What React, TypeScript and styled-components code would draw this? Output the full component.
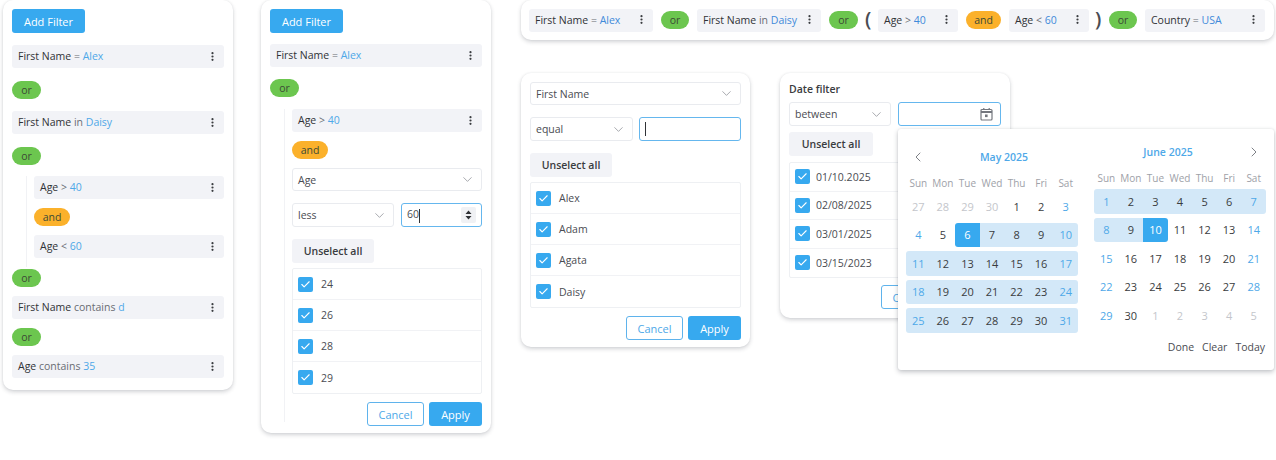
import * as React from 'react'
import styled, { createGlobalStyle } from 'styled-components'
import { ChevronDown, ChevronLeft, ChevronRight, Check } from 'lucide-react'

const GlobalStyle = createGlobalStyle`
  html, body {
    margin: 0;
    background: #fff;
    overflow: hidden;
  }
  body {
    font-family: "Open Sans", "Liberation Sans", sans-serif;
    font-size: 10.5px;
    color: #303236;
  }
`

const Page = styled.div`
  display: flex;
  align-items: flex-start;
  gap: 28px;
  padding-left: 3px;
  width: 1276px;
  height: 460px;
  box-sizing: border-box;
`

const Panel = styled.div<{ $width: number; $height: number }>`
  position: relative;
  box-sizing: border-box;
  display: flex;
  flex-direction: column;
  flex: none;
  width: ${p => p.$width}px;
  height: ${p => p.$height}px;
  padding: 9px 9px 0;
  background: #fff;
  border-radius: 10px;
  box-shadow: 0 2px 4px rgba(40, 45, 60, 0.2), 0 0 2px rgba(40, 45, 60, 0.08);
`

const RightSide = styled.div`
  display: flex;
  flex-direction: column;
  gap: 33px;
  width: 753px;
  margin-left: 2px;
`

const LowerRow = styled.div`
  display: flex;
  align-items: flex-start;
  gap: 30px;
`

const TopBar = styled.div`
  box-sizing: border-box;
  display: flex;
  align-items: center;
  gap: 8px;
  height: 40px;
  padding: 0 8px;
  background: #fff;
  border-radius: 10px;
  box-shadow: 0 2px 4px rgba(40, 45, 60, 0.2), 0 0 2px rgba(40, 45, 60, 0.08);
`

const AddButton = styled.button`
  flex: none;
  width: 73px;
  height: 24px;
  padding: 0;
  border: none;
  border-radius: 3px;
  background: #37a9ef;
  color: #fff;
  font: 500 11px "Open Sans", sans-serif;
`

const RuleBox = styled.div<{ $top?: number; $width?: number }>`
  box-sizing: border-box;
  display: flex;
  align-items: center;
  justify-content: space-between;
  flex: none;
  height: 23px;
  width: ${p => (p.$width ? `${p.$width}px` : 'auto')};
  margin-top: ${p => p.$top ?? 0}px;
  padding: 0 10px 1px 6px;
  background: #f2f3f7;
  border-radius: 3px;
`

const RuleText = styled.span`
  font-weight: 500;
  color: #303236;
  white-space: nowrap;
`

const RuleOp = styled.span`
  font-weight: 400;
  color: #696c73;
`

const RuleValue = styled.span<{ $dark?: boolean }>`
  font-weight: 400;
  color: ${p => (p.$dark ? '#3f8ada' : '#4ea8e8')};
`

const Kebab = styled.svg`
  flex: none;
  width: 3px;
  height: 9px;
  fill: #3a3c40;
`

const Pill = styled.div<{ $kind: 'or' | 'and'; $top?: number; $width?: number }>`
  box-sizing: border-box;
  display: flex;
  align-items: center;
  justify-content: center;
  flex: none;
  width: ${p => p.$width ?? (p.$kind === 'or' ? 29 : 36)}px;
  height: 18px;
  margin-top: ${p => p.$top ?? 0}px;
  padding-bottom: 1px;
  border-radius: 9px;
  background: ${p => (p.$kind === 'or' ? '#6cc64f' : '#fbb12b')};
  color: #3c4a36;
`

const Nested = styled.div<{ $top: number; $bottom?: number; $height?: number }>`
  display: flex;
  flex-direction: column;
  margin: ${p => p.$top}px 0 0 14px;
  padding: 0 0 ${p => p.$bottom ?? 0}px 7px;
  border-left: 1px solid #f1f2f5;
  ${p => (p.$height ? `height: ${p.$height}px;` : '')}
`

const Field = styled.div<{ $width?: number; $grow?: boolean; $focus?: boolean; $top?: number; $height?: number }>`
  box-sizing: border-box;
  display: flex;
  align-items: center;
  justify-content: space-between;
  flex: ${p => (p.$grow ? '1' : 'none')};
  width: ${p => (p.$width ? `${p.$width}px` : 'auto')};
  height: ${p => p.$height ?? 24}px;
  margin-top: ${p => p.$top ?? 0}px;
  padding: 0 6px 0 5px;
  background: #fff;
  border: 1px solid ${p => (p.$focus ? '#65b7ee' : '#e9ebef')};
  border-radius: 3px;
  color: #4a4c52;
`

const FieldRow = styled.div<{ $top: number; $gap?: number }>`
  display: flex;
  gap: ${p => p.$gap ?? 7}px;
  margin-top: ${p => p.$top}px;
`

const Caret = styled.span`
  display: inline-block;
  width: 1px;
  height: 14px;
  background: #303236;
  vertical-align: middle;
`

const Spin = styled.svg`
  flex: none;
  width: 15px;
  height: 16px;
  margin-right: -1px;
  background: #f0f1f4;
  border-radius: 2px;
  fill: #303236;
`

const Unselect = styled.div<{ $top: number; $width?: number }>`
  display: flex;
  align-items: center;
  justify-content: center;
  flex: none;
  align-self: flex-start;
  width: ${p => p.$width ?? 82}px;
  height: 24px;
  margin-top: ${p => p.$top}px;
  background: #f2f3f7;
  border-radius: 3px;
  font-weight: 600;
  color: #3a3c40;
`

const OptionList = styled.div<{ $top: number }>`
  box-sizing: border-box;
  flex: none;
  margin-top: ${p => p.$top}px;
  border: 1px solid #eef0f3;
  border-radius: 2px;
`

const OptionRow = styled.div<{ $height: number; $gap: number }>`
  box-sizing: border-box;
  display: flex;
  align-items: center;
  gap: ${p => p.$gap}px;
  height: ${p => p.$height}px;
  padding-left: 5px;
  border-bottom: 1px solid #f1f2f5;
  color: #4a4c52;
  &:last-child {
    border-bottom: none;
  }
`

const CheckBox = styled.span`
  display: flex;
  align-items: center;
  justify-content: center;
  flex: none;
  width: 15px;
  height: 15px;
  background: #37a9ef;
  border-radius: 2px;
  color: #fff;
`

const Footer = styled.div<{ $top?: number; $right?: number }>`
  display: flex;
  justify-content: flex-end;
  gap: 5px;
  margin-top: ${p => p.$top ?? 8}px;
  padding-right: ${p => p.$right ?? 0}px;
`

const CancelButton = styled.button`
  width: 57px;
  height: 24px;
  padding: 0;
  background: #fff;
  border: 1px solid #5fb3ec;
  border-radius: 3px;
  color: #4ea8e8;
  font: 500 11px "Open Sans", sans-serif;
`

const ApplyButton = styled.button`
  width: 53px;
  height: 24px;
  padding: 0;
  background: #37a9ef;
  border: none;
  border-radius: 3px;
  color: #fff;
  font: 500 11px "Open Sans", sans-serif;
`

const OpenParen = styled.span`
  flex: none;
  width: 8px;
  margin: -3px -3px 0 -1px;
  font-size: 20px;
  font-weight: 600;
  line-height: 30px;
  color: #4a4c52;
`

const CloseParen = styled.span`
  flex: none;
  width: 6px;
  margin: -3px 0 0 -2px;
  font-size: 20px;
  font-weight: 600;
  line-height: 30px;
  color: #4a4c52;
`

const DateTitle = styled.div`
  height: 15px;
  line-height: 15px;
  font-weight: 600;
  color: #3a3c40;
`

const Calendar = styled.div`
  position: absolute;
  left: 118px;
  top: 56px;
  box-sizing: border-box;
  display: flex;
  flex-direction: column;
  width: 376px;
  height: 241px;
  padding: 0 8px 15px;
  background: #fff;
  border-radius: 3px;
  box-shadow: 0 2px 5px rgba(40, 45, 60, 0.28), 0 0 2px rgba(40, 45, 60, 0.1);
`

const Months = styled.div`
  display: flex;
  gap: 16px;
`

const Month = styled.div<{ $offset: number }>`
  width: 172px;
  padding-top: ${p => 15 + p.$offset}px;
`

const MonthHead = styled.div<{ $flip?: boolean }>`
  display: flex;
  flex-direction: ${p => (p.$flip ? 'row-reverse' : 'row')};
  align-items: center;
  height: 16px;
`

const NavIcon = styled.span`
  display: flex;
  justify-content: center;
  flex: none;
  width: 24px;
  color: #74777e;
`

const MonthTitle = styled.div`
  flex: 1;
  text-align: center;
  font-weight: 600;
  color: #4ea8e8;
`

const WeekRow = styled.div`
  display: grid;
  grid-template-columns: repeat(7, 1fr);
  margin-top: 11px;
  height: 14px;
  line-height: 14px;
  text-align: center;
  font-size: 10px;
  color: #9ea1a8;
`

const DayGrid = styled.div`
  display: grid;
  grid-template-columns: repeat(7, 1fr);
  grid-auto-rows: 24.5px;
  row-gap: 4px;
  margin-top: 4px;
`

type Tone = 'plain' | 'muted' | 'weekend'
type Shade = 'none' | 'range' | 'rangeStart' | 'rangeEnd' | 'selStart' | 'selEnd'

const toneColors: Record<Tone, string> = {
  plain: '#3a3c40',
  muted: '#c4c6cb',
  weekend: '#4ea8e8',
}

const Day = styled.div<{ $tone: Tone; $shade: Shade }>`
  display: flex;
  align-items: center;
  justify-content: center;
  font-size: 11px;
  color: ${p => (p.$shade === 'selStart' || p.$shade === 'selEnd' ? '#fff' : toneColors[p.$tone])};
  background: ${p =>
    p.$shade === 'none' ? 'transparent' : p.$shade === 'selStart' || p.$shade === 'selEnd' ? '#37a9ef' : '#d3e8f8'};
  border-radius: ${p =>
    p.$shade === 'rangeStart' || p.$shade === 'selStart'
      ? '3px 0 0 3px'
      : p.$shade === 'rangeEnd' || p.$shade === 'selEnd'
        ? '0 3px 3px 0'
        : '0'};
`

const CalFooter = styled.div`
  display: flex;
  justify-content: flex-end;
  gap: 8px;
  margin-top: auto;
  padding-right: 1px;
  line-height: 15px;
  color: #4a4c52;
`

const DateIcon = styled.svg`
  flex: none;
  width: 13px;
  height: 14px;
  margin-right: 1px;
  color: #74777e;
`

const dots = () => (
  <Kebab viewBox="0 0 3 9">
    <circle cx="1.5" cy="1.2" r="1.1" />
    <circle cx="1.5" cy="4.5" r="1.1" />
    <circle cx="1.5" cy="7.8" r="1.1" />
  </Kebab>
)

const Rule = ({
  name,
  op,
  value,
  top,
  width,
  dark,
}: {
  name: string
  op: string
  value: string
  top?: number
  width?: number
  dark?: boolean
}) => (
  <RuleBox $top={top} $width={width}>
    <RuleText>
      {name} <RuleOp>{op}</RuleOp> <RuleValue $dark={dark}>{value}</RuleValue>
    </RuleText>
    {dots()}
  </RuleBox>
)

const Drop = () => <ChevronDown size={15} strokeWidth={1} color="#74777e" />

const Options = ({ items, height, gap }: { items: string[]; height: number; gap: number }) => (
  <>
    {items.map(item => (
      <OptionRow key={item} $height={height} $gap={gap}>
        <CheckBox>
          <Check size={11} strokeWidth={2.4} />
        </CheckBox>
        {item}
      </OptionRow>
    ))}
  </>
)

const weekDays = ['Sun', 'Mon', 'Tue', 'Wed', 'Thu', 'Fri', 'Sat']

const mayDays = [27, 28, 29, 30, ...Array.from({ length: 31 }, (_, i) => i + 1)]
const juneDays = [...Array.from({ length: 30 }, (_, i) => i + 1), 1, 2, 3, 4, 5]

const mayShade = (i: number): Shade => {
  if (i < 9) return 'none'
  if (i === 9) return 'selStart'
  if (i === 13) return 'rangeEnd'
  if (i % 7 === 0) return 'rangeStart'
  if (i % 7 === 6) return 'rangeEnd'
  return 'range'
}

const juneShade = (i: number): Shade => {
  if (i > 9) return 'none'
  if (i === 9) return 'selEnd'
  if (i % 7 === 0) return 'rangeStart'
  if (i === 6) return 'rangeEnd'
  return 'range'
}

const toneOf = (i: number, muted: boolean): Tone => {
  if (muted) return 'muted'
  return i % 7 === 0 || i % 7 === 6 ? 'weekend' : 'plain'
}

const CalendarMonth = ({
  title,
  offset,
  flip,
  days,
  shade,
  isMuted,
}: {
  title: string
  offset: number
  flip?: boolean
  days: number[]
  shade: (i: number) => Shade
  isMuted: (i: number) => boolean
}) => (
  <Month $offset={offset}>
    <MonthHead $flip={flip}>
      <NavIcon>{flip ? <ChevronRight size={16} strokeWidth={1.4} /> : <ChevronLeft size={16} strokeWidth={1.4} />}</NavIcon>
      <MonthTitle>{title}</MonthTitle>
    </MonthHead>
    <WeekRow>
      {weekDays.map(d => (
        <span key={d}>{d}</span>
      ))}
    </WeekRow>
    <DayGrid>
      {days.map((d, i) => (
        <Day key={i} $tone={toneOf(i, isMuted(i))} $shade={shade(i)}>
          {d}
        </Day>
      ))}
    </DayGrid>
  </Month>
)

export default function App() {
  return (
    <Page>
      <GlobalStyle />

      <Panel $width={230} $height={390}>
        <AddButton>Add Filter</AddButton>
        <Rule name="First Name" op="=" value="Alex" top={12} />
        <Pill $kind="or" $top={13}>or</Pill>
        <Rule name="First Name" op="in" value="Daisy" top={12} />
        <Pill $kind="or" $top={13}>or</Pill>
        <Nested $top={11} $bottom={9}>
          <Rule name="Age" op=">" value="40" />
          <Pill $kind="and" $top={9}>and</Pill>
          <Rule name="Age" op="<" value="60" top={9} />
        </Nested>
        <Pill $kind="or" $top={2}>or</Pill>
        <Rule name="First Name" op="contains" value="d" top={9} />
        <Pill $kind="or" $top={9}>or</Pill>
        <Rule name="Age" op="contains" value="35" top={9} />
      </Panel>

      <Panel $width={230} $height={433}>
        <AddButton>Add Filter</AddButton>
        <Rule name="First Name" op="=" value="Alex" top={11} />
        <Pill $kind="or" $top={12}>or</Pill>
        <Nested $top={12} $height={313}>
          <Rule name="Age" op=">" value="40" />
          <Pill $kind="and" $top={9}>and</Pill>
          <Field $top={9} $height={23}>
            Age
            <Drop />
          </Field>
          <FieldRow $top={12}>
            <Field $width={102}>
              less
              <Drop />
            </Field>
            <Field $focus $grow>
              <span>
                60
                <Caret />
              </span>
              <Spin viewBox="0 0 15 16">
                <path d="M7.5 3.5 L10.5 7 H4.5 Z M7.5 12.5 L4.5 9 H10.5 Z" />
              </Spin>
            </Field>
          </FieldRow>
          <Unselect $top={12}>Unselect all</Unselect>
          <OptionList $top={5}>
            <Options items={['24', '26', '28', '29']} height={31} gap={8} />
          </OptionList>
          <Footer>
            <CancelButton>Cancel</CancelButton>
            <ApplyButton>Apply</ApplyButton>
          </Footer>
        </Nested>
      </Panel>

      <RightSide>
        <TopBar>
          <Rule name="First Name" op="=" value="Alex" width={124} dark />
          <Pill $kind="or" $width={28}>or</Pill>
          <Rule name="First Name" op="in" value="Daisy" width={124} dark />
          <Pill $kind="or">or</Pill>
          <OpenParen>(</OpenParen>
          <Rule name="Age" op=">" value="40" width={80} dark />
          <Pill $kind="and" $width={35}>and</Pill>
          <Rule name="Age" op="<" value="60" width={80} dark />
          <CloseParen>)</CloseParen>
          <Pill $kind="or" $width={28}>or</Pill>
          <Rule name="Country" op="=" value="USA" width={120} dark />
        </TopBar>

        <LowerRow>
          <Panel $width={229} $height={274}>
            <Field $height={23}>
              First Name
              <Drop />
            </Field>
            <FieldRow $top={12} $gap={6}>
              <Field $width={103}>
                equal
                <Drop />
              </Field>
              <Field $focus $grow>
                <Caret />
              </Field>
            </FieldRow>
            <Unselect $top={12}>Unselect all</Unselect>
            <OptionList $top={5}>
              <Options items={['Alex', 'Adam', 'Agata', 'Daisy']} height={31} gap={8} />
            </OptionList>
            <Footer>
              <CancelButton>Cancel</CancelButton>
              <ApplyButton>Apply</ApplyButton>
            </Footer>
          </Panel>

          <Panel $width={230} $height={245}>
            <DateTitle>Date filter</DateTitle>
            <FieldRow $top={5}>
              <Field $width={102}>
                between
                <Drop />
              </Field>
              <Field $focus $grow>
                <span />
                <DateIcon viewBox="0 0 13 14" fill="none">
                  <rect x="1" y="2.5" width="11" height="10.5" rx="1" stroke="currentColor" strokeWidth="1.2" />
                  <path d="M1 5 H12" stroke="currentColor" strokeWidth="2" />
                  <path d="M3.8 1 V3 M9.2 1 V3" stroke="currentColor" strokeWidth="1.2" />
                  <rect x="5" y="7.5" width="2.6" height="2.6" fill="currentColor" />
                </DateIcon>
              </Field>
            </FieldRow>
            <Unselect $top={6} $width={84}>Unselect all</Unselect>
            <OptionList $top={6}>
              <Options items={['01/10.2025', '02/08/2025', '03/01/2025', '03/15/2023']} height={28.5} gap={6} />
            </OptionList>
            <Footer $top={7} $right={63}>
              <CancelButton>Cancel</CancelButton>
            </Footer>

            <Calendar>
              <Months>
                <CalendarMonth title="May 2025" offset={5} days={mayDays} shade={mayShade} isMuted={i => i < 4} />
                <CalendarMonth title="June 2025" offset={0} flip days={juneDays} shade={juneShade} isMuted={i => i >= 30} />
              </Months>
              <CalFooter>
                <span>Done</span>
                <span>Clear</span>
                <span>Today</span>
              </CalFooter>
            </Calendar>
          </Panel>
        </LowerRow>
      </RightSide>
    </Page>
  )
}
